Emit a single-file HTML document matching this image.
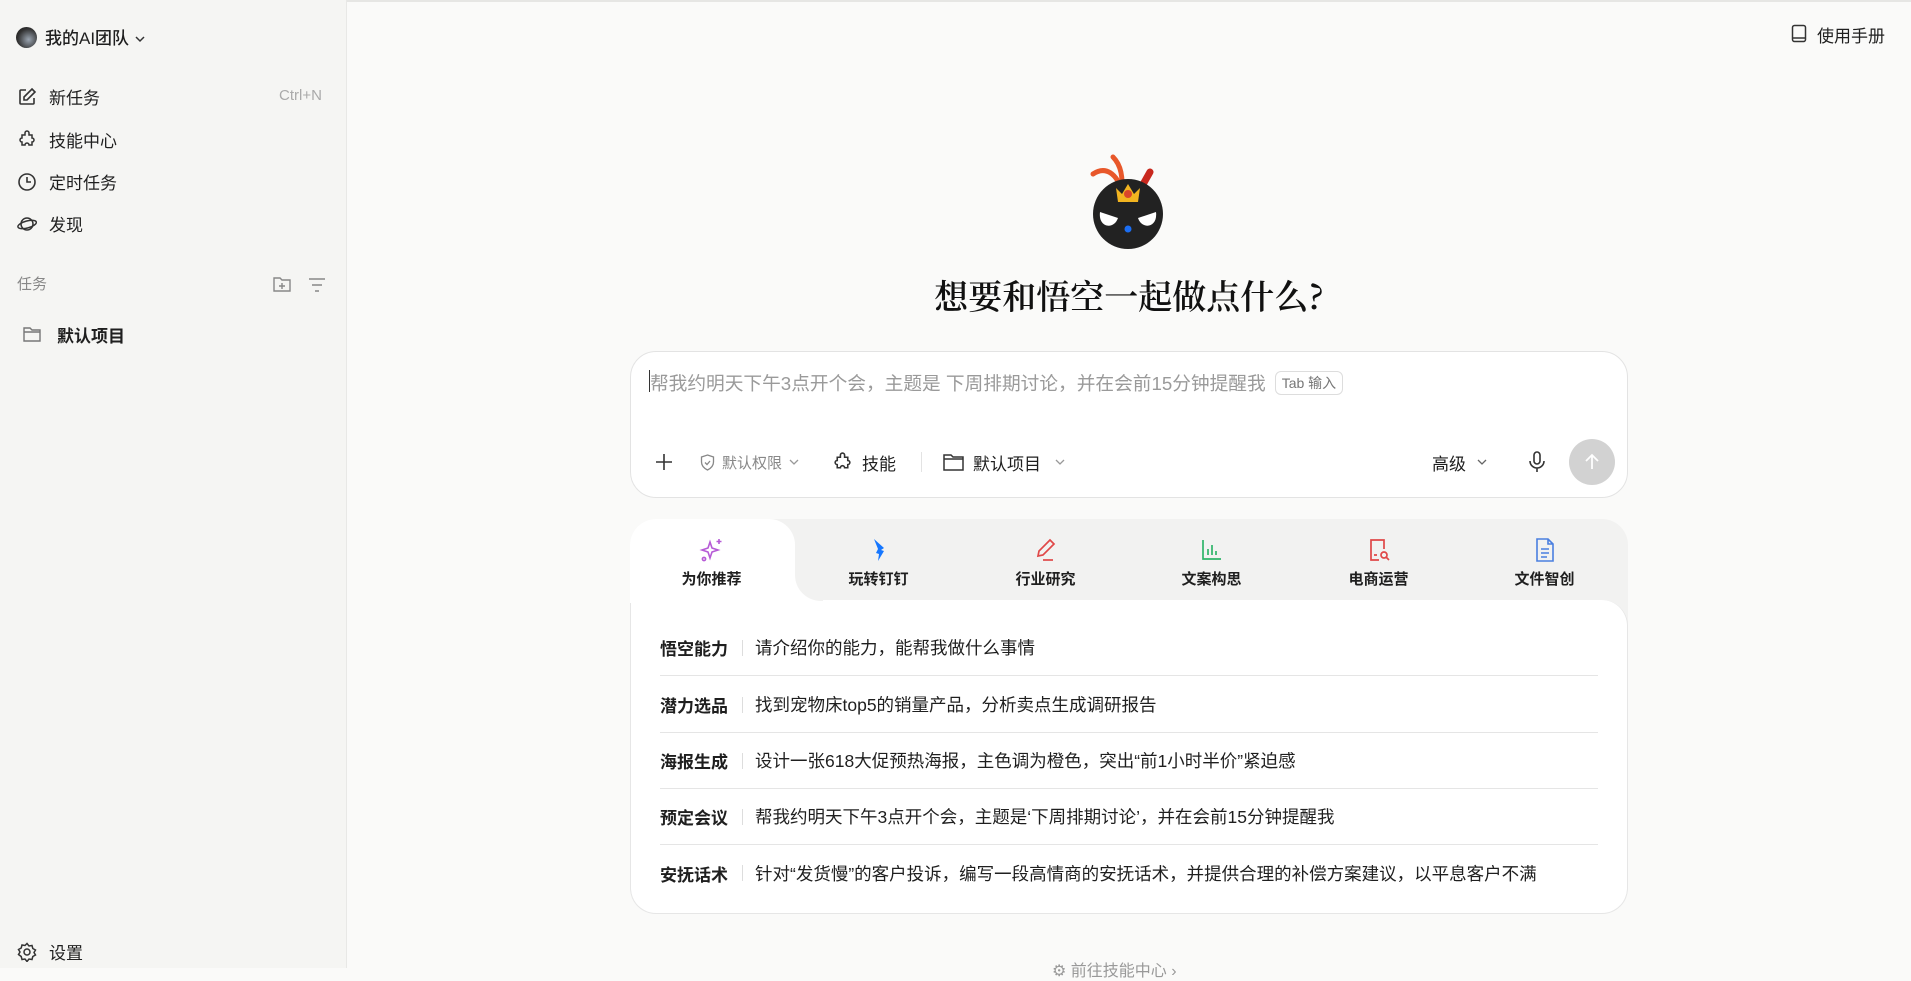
<!DOCTYPE html>
<html><head><meta charset="utf-8">
<style>
*{box-sizing:border-box;margin:0;padding:0}
body{width:1911px;height:968px;overflow:hidden;background:#fafaf9;font-family:"Liberation Sans","Noto Sans CJK SC",sans-serif;color:#1f1f1f;position:relative}
.side{position:absolute;left:0;top:0;width:347px;height:968px;background:#f5f5f3;border-right:1px solid #e8e8e6}
.topline{position:absolute;left:0;top:0;width:1911px;height:2px;background:#e6e6e4}
.abs{position:absolute}
.mi{position:absolute;left:17px;display:flex;align-items:center;font-size:17px;color:#1f1f1f}
.mi svg{margin-right:12px}
.row{position:absolute;left:660px;width:938px;height:56px;display:flex;align-items:center;font-size:17.5px}
.row b{font-weight:700;width:73px;font-size:17px}
.row i{display:inline-block;width:1px;height:16px;background:#ddd;margin:0 12px 0 9px}
.row.sep{border-bottom:1px solid #e5e5e5}
.tab{position:absolute;top:519px;width:167px;height:81px;text-align:center;font-size:15px;font-weight:700}
.tab svg{position:absolute;left:71px;top:18px}
.tab span{position:absolute;left:0;right:0;top:49px}
</style></head><body>
<div class="topline"></div>
<div class="side">
  <div class="abs" style="left:16px;top:27px;width:21px;height:21px;border-radius:50%;background:radial-gradient(circle at 60% 60%,#9aa4b0,#333 60%,#111)"></div>
  <div class="abs" style="left:45px;top:24px;font-size:17px;font-weight:500">我的AI团队 <svg width="12" height="10" viewBox="0 0 12 10"><path d="M2 3l4 4 4-4" fill="none" stroke="#333" stroke-width="1.5"/></svg></div>
  <div class="mi" style="top:84px"><svg width="20" height="20" viewBox="0 0 20 20" fill="none" stroke="#333" stroke-width="1.6"><path d="M9 3H4a1 1 0 0 0-1 1v12a1 1 0 0 0 1 1h12a1 1 0 0 0 1-1v-5"/><path d="M15 2l3 3-8 8H7v-3z"/></svg>新任务</div>
  <div class="abs" style="left:279px;top:87px;font-size:15px;color:#aaa">Ctrl+N</div>
  <div class="mi" style="top:127px"><svg width="20" height="20" viewBox="0 0 20 20" fill="none" stroke="#333" stroke-width="1.5"><path d="M8 3a2 2 0 0 1 4 0v2h3v3a2 2 0 0 1 0 4v3h-3a2 2 0 0 0-4 0H5v-3a2 2 0 0 1 0-4V5h3z"/></svg>技能中心</div>
  <div class="mi" style="top:169px"><svg width="20" height="20" viewBox="0 0 20 20" fill="none" stroke="#333" stroke-width="1.6"><circle cx="10" cy="10" r="8"/><path d="M10 5v5h4"/></svg>定时任务</div>
  <div class="mi" style="top:211px"><svg width="20" height="20" viewBox="0 0 20 20" fill="none" stroke="#333" stroke-width="1.5"><circle cx="10" cy="10" r="6"/><ellipse cx="10" cy="10.5" rx="9.5" ry="3.5" transform="rotate(-15 10 10)"/></svg>发现</div>
  <div class="abs" style="left:17px;top:273px;font-size:15px;color:#888">任务</div>
  <svg class="abs" style="left:272px;top:275px" width="20" height="18" viewBox="0 0 20 18" fill="none" stroke="#888" stroke-width="1.4"><path d="M2 3h6l2 2h8v11H2z"/><path d="M10 8v6M7 11h6"/></svg>
  <svg class="abs" style="left:307px;top:277px" width="20" height="16" viewBox="0 0 20 16" fill="none" stroke="#888" stroke-width="1.4"><path d="M2 2h16M5 8h10M8 14h4"/></svg>
  <svg class="abs" style="left:23px;top:326px" width="18" height="16" viewBox="0 0 18 16" fill="none" stroke="#777" stroke-width="1.4"><path d="M1 2h6l2 2h8v11H1z M1 6h16"/></svg>
  <div class="abs" style="left:57px;top:322px;font-size:17px;font-weight:700">默认项目</div>
  <div class="mi" style="top:939px"><svg width="20" height="20" viewBox="0 0 20 20" fill="none" stroke="#333" stroke-width="1.5"><circle cx="10" cy="10" r="3"/><path d="M10 1.5l2 2.5 3-.5.8 3 2.7 1.5-1.5 2.5 1.5 2.5-2.7 1.5-.8 3-3-.5-2 2.5-2-2.5-3 .5-.8-3L1.5 12.5 3 10 1.5 7.5 4.2 6 5 3l3 .5z"/></svg>设置</div>
</div>

<svg class="abs" style="left:1791px;top:24px" width="16" height="19" viewBox="0 0 16 19" fill="none" stroke="#333" stroke-width="1.5"><rect x="1.5" y="1.5" width="13" height="16" rx="2"/><path d="M1.5 14h13"/></svg>
<div class="abs" style="left:1817px;top:22px;font-size:17px">使用手册</div>

<!-- logo -->
<svg class="abs" style="left:1088px;top:152px" width="82" height="100" viewBox="0 0 82 100">
  <path d="M5 22c12-8 24-2 30 20" fill="none" stroke="#e8572a" stroke-width="5" stroke-linecap="round"/>
  <path d="M25 5c10 10 10 25 8 38" fill="none" stroke="#e8572a" stroke-width="5" stroke-linecap="round"/>
  <path d="M62 20l-9 16" stroke="#c8281e" stroke-width="7" stroke-linecap="round"/>
  <circle cx="40" cy="62" r="35" fill="#222"/>
  <path d="M28 36l6 6 6-10 6 10 6-6-2 14H30z" fill="#f2b420"/>
  <circle cx="40" cy="42" r="4" fill="#d9452b"/>
  <path d="M12 60c-2 16 14 18 18 6z" fill="#fff"/>
  <path d="M68 60c2 16-14 18-18 6z" fill="#fff"/>
  <circle cx="40" cy="77" r="3.5" fill="#1b6ef3"/>
</svg>
<div class="abs" style="left:0;width:2258px;top:270px;text-align:center;font-family:'Noto Serif CJK SC',serif;font-size:34px;font-weight:600;color:#111">想要和悟空一起做点什么?</div>

<!-- input -->
<div class="abs" style="left:630px;top:351px;width:998px;height:147px;background:#fff;border:1px solid #e3e3e3;border-radius:26px"></div>
<div class="abs" style="left:649px;top:370px;width:1px;height:22px;background:#333"></div>
<div class="abs" style="left:650px;top:369px;font-size:18.7px;color:#9a9a9a;display:flex;align-items:center">帮我约明天下午3点开个会，主题是 下周排期讨论，并在会前15分钟提醒我<span style="margin-left:9px;height:24px;padding:0 6px;border:1px solid #ddd;border-radius:6px;font-size:14px;color:#777;line-height:22px">Tab 输入</span></div>
<svg class="abs" style="left:654px;top:452px" width="20" height="20" viewBox="0 0 20 20" stroke="#333" stroke-width="1.6"><path d="M10 2v16M2 10h16"/></svg>
<svg class="abs" style="left:700px;top:454px" width="15" height="17" viewBox="0 0 15 17" fill="none" stroke="#888" stroke-width="1.3"><path d="M7.5 1l6 2v5c0 4-3 6.5-6 8-3-1.5-6-4-6-8V3z"/><path d="M5 8.5l2 2 3-3.5"/></svg>
<div class="abs" style="left:722px;top:452px;font-size:15px;color:#888">默认权限</div>
<svg class="abs" style="left:788px;top:457px" width="12" height="10" viewBox="0 0 12 10"><path d="M2 3l4 4 4-4" fill="none" stroke="#999" stroke-width="1.3"/></svg>
<svg class="abs" style="left:832px;top:452px" width="21" height="21" viewBox="0 0 20 20" fill="none" stroke="#333" stroke-width="1.5"><path d="M8 3a2 2 0 0 1 4 0v2h3v3a2 2 0 0 1 0 4v3h-3a2 2 0 0 0-4 0H5v-3a2 2 0 0 1 0-4V5h3z"/></svg>
<div class="abs" style="left:862px;top:450px;font-size:17px">技能</div>
<div class="abs" style="left:921px;top:452px;width:1px;height:20px;background:#e3e3e3"></div>
<svg class="abs" style="left:943px;top:453px" width="21" height="18" viewBox="0 0 21 18" fill="none" stroke="#333" stroke-width="1.5"><path d="M1 2h7l2 2h10v13H1z M1 6h19"/></svg>
<div class="abs" style="left:973px;top:450px;font-size:17px">默认项目</div>
<svg class="abs" style="left:1054px;top:457px" width="12" height="10" viewBox="0 0 12 10"><path d="M2 3l4 4 4-4" fill="none" stroke="#999" stroke-width="1.3"/></svg>
<div class="abs" style="left:1432px;top:450px;font-size:17px">高级</div>
<svg class="abs" style="left:1476px;top:457px" width="12" height="10" viewBox="0 0 12 10"><path d="M2 3l4 4 4-4" fill="none" stroke="#666" stroke-width="1.3"/></svg>
<svg class="abs" style="left:1528px;top:451px" width="18" height="22" viewBox="0 0 18 22" fill="none" stroke="#333" stroke-width="1.6"><rect x="6" y="1" width="6" height="12" rx="3"/><path d="M2 10a7 7 0 0 0 14 0M9 17v4"/></svg>
<div class="abs" style="left:1569px;top:439px;width:46px;height:46px;border-radius:50%;background:#d2d2d2"></div>
<svg class="abs" style="left:1582px;top:452px" width="20" height="20" viewBox="0 0 20 20" fill="none" stroke="#fff" stroke-width="1.8"><path d="M10 17V3M4 9l6-6 6 6"/></svg>

<!-- tabs panel -->
<div class="abs" style="left:630px;top:519px;width:998px;height:395px;background:#f2f2f1;border-radius:26px"></div>
<div class="abs" style="left:630px;top:600px;width:998px;height:314px;background:#fff;border:1px solid #e6e6e6;border-top:none;border-radius:0 26px 26px 26px"></div>
<div class="abs" style="left:630px;top:519px;width:165px;height:84px;background:#fff;border-radius:26px 26px 0 0"></div>
<div class="abs" style="left:795px;top:575px;width:28px;height:26px;background:#fff"></div>
<div class="abs" style="left:795px;top:549px;width:28px;height:52px;background:#f2f2f1;border-bottom-left-radius:26px"></div>

<div class="tab" style="left:628px"><svg width="26" height="26" viewBox="0 0 26 26" fill="none" stroke="#b65ad6" stroke-width="1.6"><path d="M11 5l2 6 6 2-6 2-2 6-2-6-6-2 6-2z"/><path d="M20 2v5M17.5 4.5h5"/><circle cx="5" cy="22" r="1.6"/></svg><span>为你推荐</span></div>
<div class="tab" style="left:795px"><svg width="26" height="26" viewBox="0 0 26 26"><path d="M8 2l10 9-3 2 3 1-6 10 1-7-3-1 2-4z" fill="#1677ff"/></svg><span>玩转钉钉</span></div>
<div class="tab" style="left:962px"><svg width="26" height="26" viewBox="0 0 26 26" fill="none" stroke="#e04848" stroke-width="1.7"><path d="M17 3l4 4-11 11-5 1 1-5z"/><path d="M10 23h10"/></svg><span>行业研究</span></div>
<div class="tab" style="left:1128px"><svg width="26" height="26" viewBox="0 0 26 26" fill="none" stroke="#2fb56a" stroke-width="1.7"><path d="M4 3v19h18M9 18v-6M13 18V8M17 18v-4"/></svg><span>文案构思</span></div>
<div class="tab" style="left:1295px"><svg width="26" height="26" viewBox="0 0 26 26" fill="none" stroke="#e04848" stroke-width="1.7"><path d="M18 12V3H5v20h8"/><circle cx="18" cy="18" r="3"/><path d="M20 20l3 3M8 18h3"/></svg><span>电商运营</span></div>
<div class="tab" style="left:1461px"><svg width="26" height="26" viewBox="0 0 26 26" fill="none" stroke="#4a7fe0" stroke-width="1.6"><path d="M5 2h11l5 5v17H5z M16 2v5h5M9 12h8M9 16h8M9 20h6"/></svg><span>文件智创</span></div>

<div class="row sep" style="top:620px"><b>悟空能力</b><i></i>请介绍你的能力，能帮我做什么事情</div>
<div class="row sep" style="top:677px"><b>潜力选品</b><i></i>找到宠物床top5的销量产品，分析卖点生成调研报告</div>
<div class="row sep" style="top:733px"><b>海报生成</b><i></i>设计一张618大促预热海报，主色调为橙色，突出“前1小时半价”紧迫感</div>
<div class="row sep" style="top:789px"><b>预定会议</b><i></i>帮我约明天下午3点开个会，主题是‘下周排期讨论’，并在会前15分钟提醒我</div>
<div class="row" style="top:845px"><b>安抚话术</b><i></i>针对“发货慢”的客户投诉，编写一段高情商的安抚话术，并提供合理的补偿方案建议，以平息客户不满</div>

<div class="abs" style="left:1052px;top:957px;font-size:16px;color:#999">⚙ 前往技能中心 ›</div>
</body></html>
